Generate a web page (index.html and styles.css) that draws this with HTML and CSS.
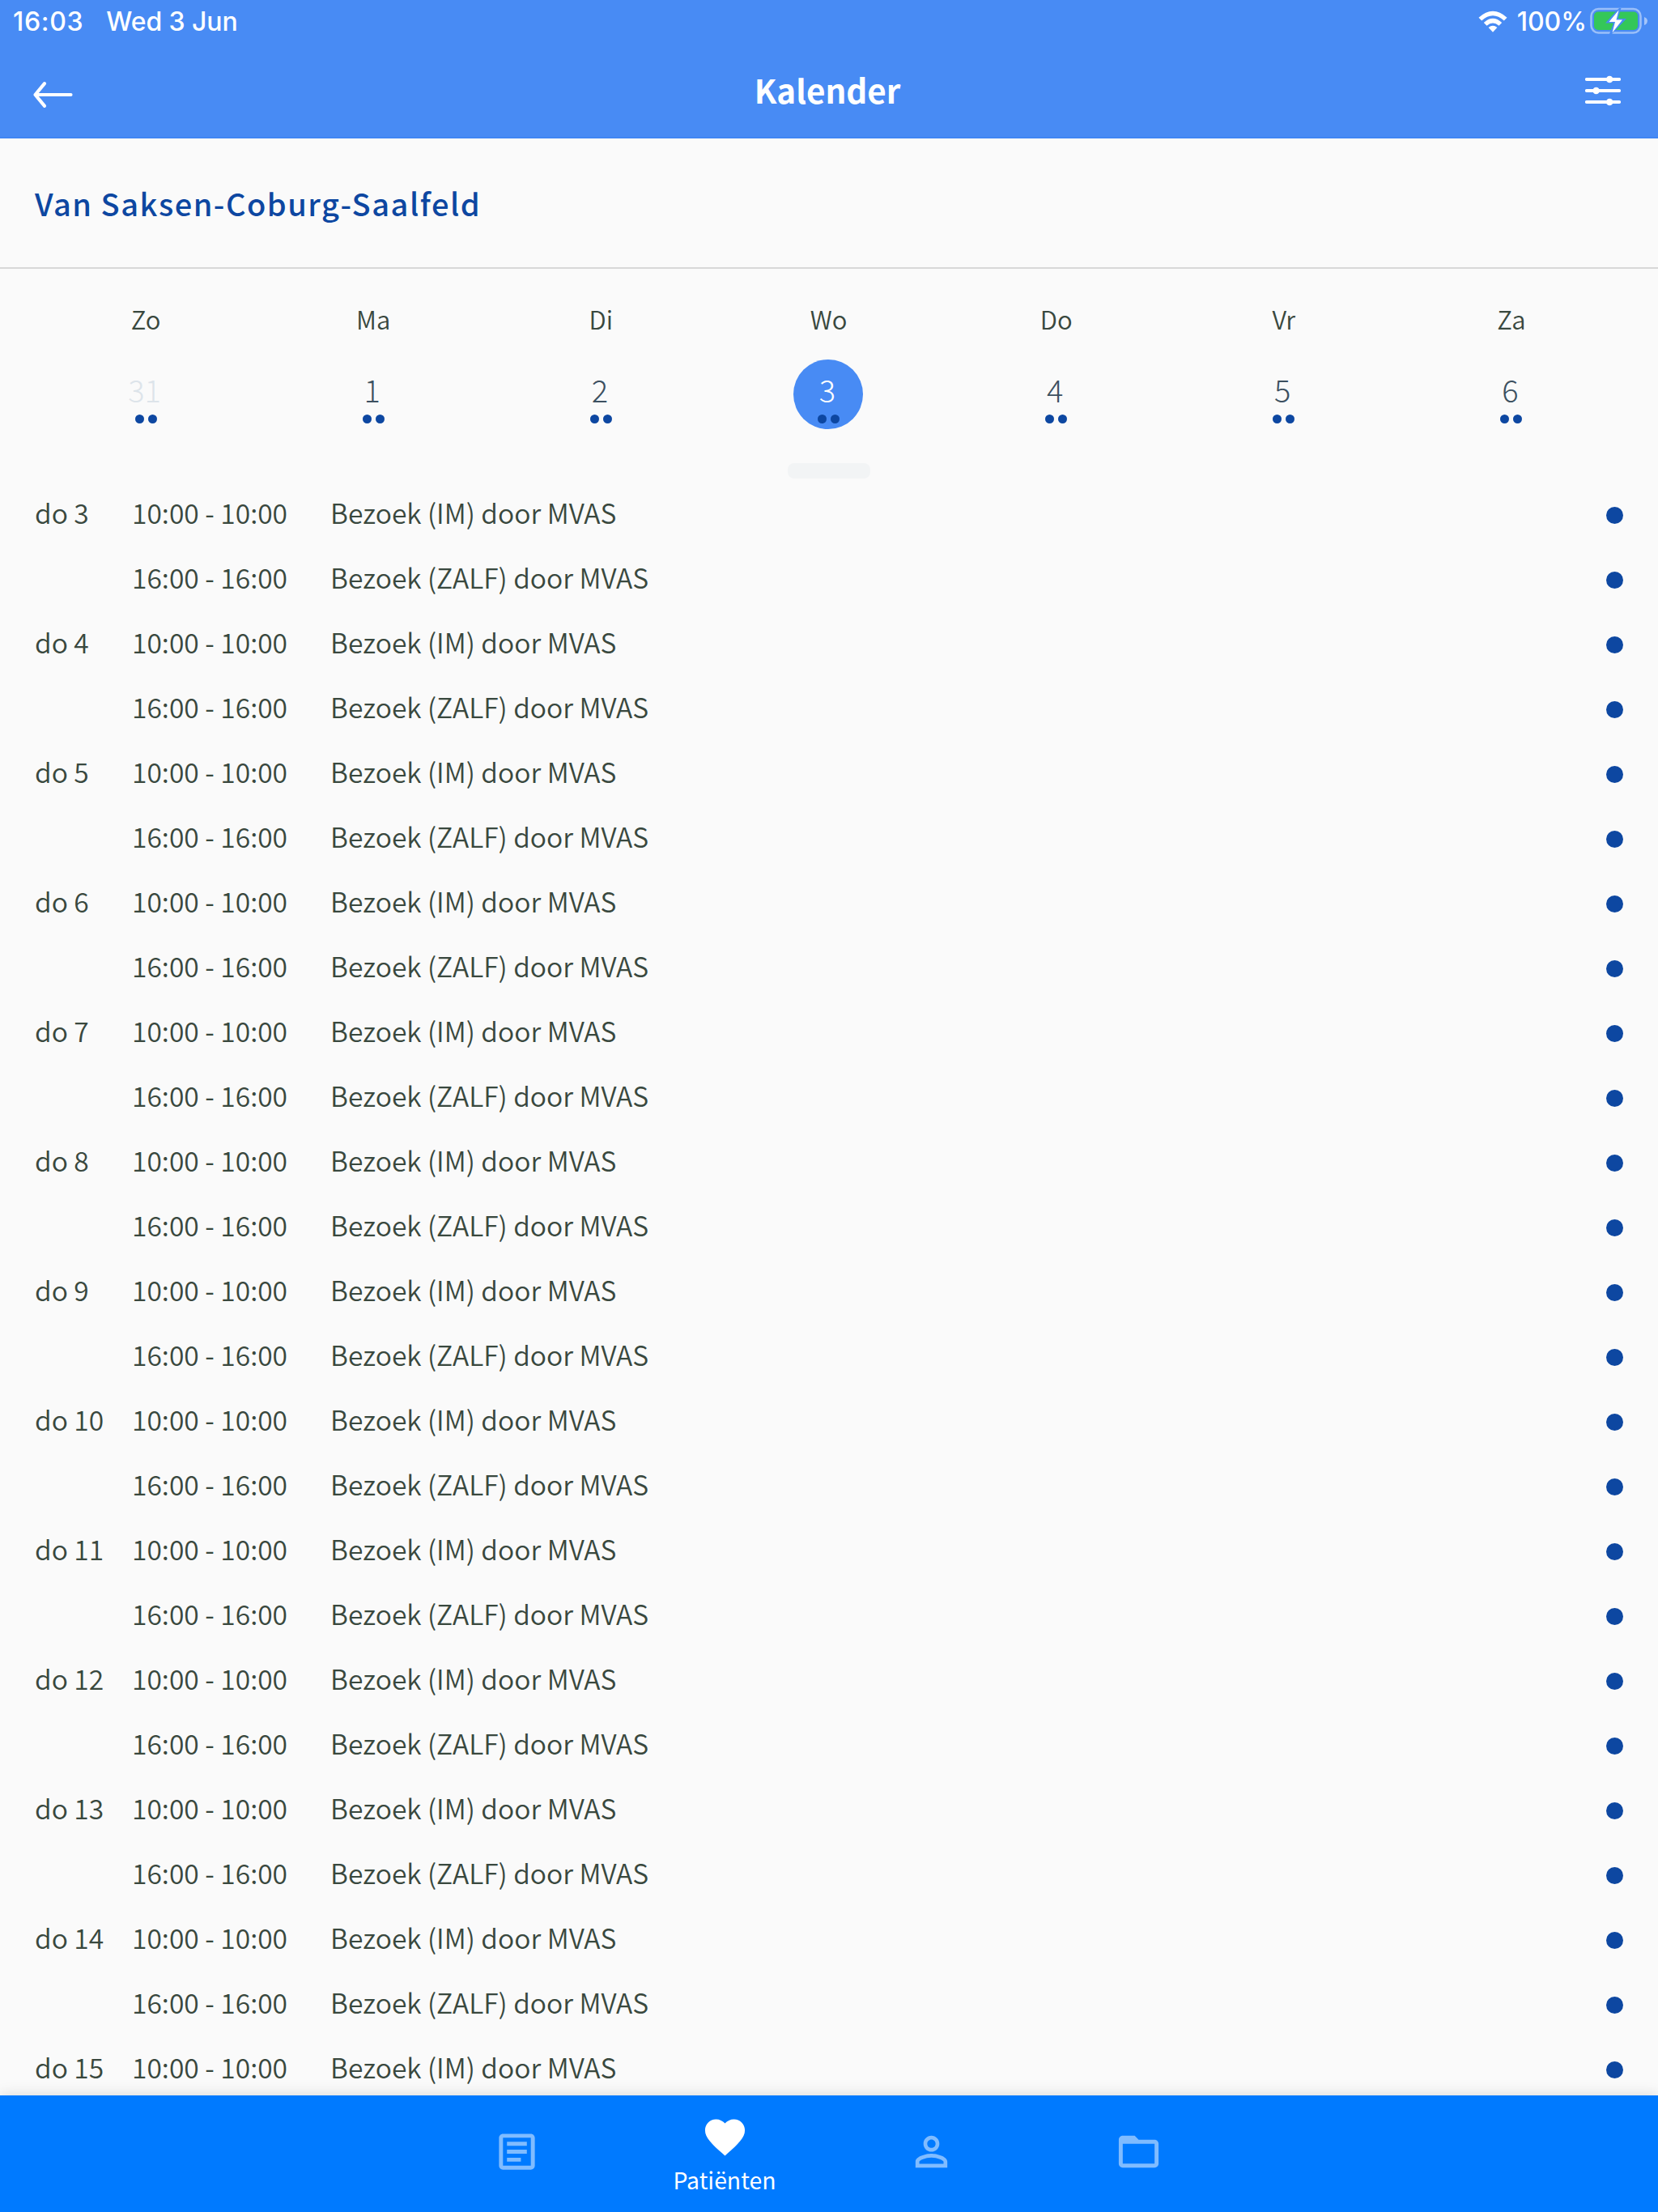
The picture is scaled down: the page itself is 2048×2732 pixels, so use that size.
FILE: index.html
```html
<!DOCTYPE html>
<html lang="nl">
<head>
  <meta charset="UTF-8">
  <title>Kalender</title>
  <link rel="stylesheet" href="styles.css">
</head>
<body>

  <header class="header">
    <div class="status">
      <span class="clock">16:03</span>
      <span class="date">Wed 3 Jun</span>
      <svg class="wifi" viewBox="0 0 36 27">
        <path d="M0.5 8.8 Q18 -7.2 35.5 8.8 L31.8 12.6 Q18 -0.2 4.2 12.6Z"/>
        <path d="M6.8 15 Q18 4.6 29.2 15 L25.5 18.8 Q18 12 10.5 18.8Z"/>
        <path d="M12.6 21 Q18 16.6 23.4 21 L18 26.8Z"/>
      </svg>
      <span class="percent">100%</span>
      <svg class="battery" viewBox="0 0 72 34">
        <rect x="1.5" y="2" width="61" height="29.5" rx="9" fill="none" stroke="#fff" stroke-opacity="0.45" stroke-width="2.6"/>
        <rect x="5" y="5.6" width="54" height="22.3" rx="5" fill="#34c759"/>
        <path d="M67 12 Q71 13.5 71 17 Q71 20.5 67 22Z" fill="#fff" fill-opacity="0.5"/>
        <path d="M36 1 L19 19.5 H29 L24 33 H27 L45 14 H34.5 L38.5 1Z" fill="#488bf4"/>
        <path d="M35.5 3.5 L23.5 18 H31 L27.5 31.5 L40 15.5 H32.5Z" fill="#fff"/>
      </svg>
    </div>
    <div class="navbar">
      <svg class="back" viewBox="0 0 50 34">
        <path d="M47.5 17 H3.5 M15 3.2 L3.5 17 L15 30.8"/>
      </svg>
      <h1 class="title">Kalender</h1>
      <svg class="filter" viewBox="0 0 44 38">
        <path d="M2 5 H42 M2 19 H42 M2 33 H42"/>
        <circle cx="30.2" cy="5" r="4.3"/>
        <circle cx="13.6" cy="19" r="4.3"/>
        <circle cx="30.2" cy="33" r="4.3"/>
      </svg>
    </div>
  </header>

  <h2 class="patient">Van Saksen-Coburg-Saalfeld</h2>

  <section class="week" id="week"></section>
  <div class="handle"></div>

  <main class="agenda" id="agenda"></main>

  <nav class="tabs">
    <a class="tab">
      <svg viewBox="0 0 24 24"><path d="M19 5v14H5V5h14m0-2H5c-1.1 0-2 .9-2 2v14c0 1.1.9 2 2 2h14c1.1 0 2-.9 2-2V5c0-1.1-.9-2-2-2zM14 17H7v-2h7v2zm3-4H7v-2h10v2zm0-4H7V7h10v2z"/></svg>
    </a>
    <a class="tab active">
      <svg viewBox="0 0 24 24"><path d="M12 21.35l-1.45-1.32C5.4 15.36 2 12.28 2 8.5 2 5.42 4.42 3 7.5 3c1.74 0 3.41.81 4.5 2.09C13.09 3.81 14.76 3 16.5 3 19.58 3 22 5.42 22 8.5c0 3.78-3.4 6.86-8.55 11.54L12 21.35z"/></svg>
      <span>Patiënten</span>
    </a>
    <a class="tab">
      <svg viewBox="0 0 24 24"><path d="M12 5.9c1.16 0 2.1.94 2.1 2.1s-.94 2.1-2.1 2.1S9.9 9.16 9.9 8s.94-2.1 2.1-2.1m0 9c2.97 0 6.1 1.46 6.1 2.1v1.1H5.9V17c0-.64 3.13-2.1 6.1-2.1M12 4C9.79 4 8 5.79 8 8s1.79 4 4 4 4-1.79 4-4-1.79-4-4-4zm0 9c-2.67 0-8 1.34-8 4v3h16v-3c0-2.66-5.33-4-8-4z"/></svg>
    </a>
    <a class="tab">
      <svg viewBox="0 0 24 24"><path d="M20 6h-8l-2-2H4c-1.1 0-1.99.9-1.99 2L2 18c0 1.1.9 2 2 2h16c1.1 0 2-.9 2-2V8c0-1.1-.9-2-2-2zm0 12H4V8h16v10z"/></svg>
    </a>
  </nav>

  <script>
    const days = [["Zo", 31], ["Ma", 1], ["Di", 2], ["Wo", 3], ["Do", 4], ["Vr", 5], ["Za", 6]];
    const visits = [["10:00 - 10:00", "IM"], ["16:00 - 16:00", "ZALF"]];

    document.getElementById("week").innerHTML = days.map(([name, nr]) => {
      const state = nr === 31 ? " outside" : nr === 3 ? " selected" : "";
      return `<div class="day${state}">
        <span class="day-name">${name}</span>
        <div class="day-number"><span>${nr}</span><div class="marks"><i></i><i></i></div></div>
      </div>`;
    }).join("");

    let rows = "";
    for (let day = 3; day <= 15; day++) {
      visits.forEach(([time, type], i) => {
        // the tab bar cuts the list off after the first visit of the 15th
        if (day === 15 && i > 0) return;
        rows += `<div class="visit">
          <span class="visit-day">${i === 0 ? "do " + day : ""}</span>
          <span class="visit-time">${time}</span>
          <span class="visit-name">Bezoek (${type}) door MVAS</span>
          <i class="visit-dot"></i>
        </div>`;
      });
    }
    document.getElementById("agenda").innerHTML = rows;
  </script>

</body>
</html>
```
FILE: styles.css
```css
* {
  box-sizing: border-box;
}

body {
  margin: 0;
  width: 2048px;
  height: 2732px;
  display: flex;
  flex-direction: column;
  overflow: hidden;
  background-color: #fafafa;
  color: #39483e;
  font-family: "Noto Sans CJK SC", "Noto Sans", sans-serif;
}

svg {
  display: block;
  flex: none;
}

.header {
  flex: none;
  height: 171px;
  background-color: #488bf4;
  border-bottom: 2px solid #3f86f3;
  color: white;
}

/* iPad status bar */
.status {
  display: flex;
  align-items: center;
  height: 52px;
  padding: 0 12px 0 16px;
  font-family: Inter, sans-serif;
  font-size: 32px;
  font-weight: 500;
}

.clock {
  letter-spacing: 0.7px;
}

.date {
  margin-left: 28px;
  letter-spacing: -0.1px;
}

.wifi {
  width: 36px;
  height: 27px;
  margin-left: auto;
  fill: white;
}

.percent {
  margin-left: 12px;
}

.battery {
  width: 72px;
  height: 34px;
  margin-left: 4px;
}

.navbar {
  display: grid;
  grid-template-columns: 1fr auto 1fr;
  align-items: center;
  height: 117px;
  padding: 0 46px 0 40px;
}

.back {
  width: 50px;
  height: 34px;
  margin-top: 13px;
}

.back path,
.filter path {
  fill: none;
  stroke: white;
  stroke-width: 4.2;
  stroke-linecap: round;
  stroke-linejoin: round;
}

.title {
  margin: 0 0 0 2px;
  font-size: 40.4px;
  font-weight: 700;
  line-height: 60px;
}

.filter {
  width: 44px;
  height: 38px;
  margin-top: 3px;
  justify-self: end;
  fill: white;
}

.patient {
  flex: none;
  height: 161px;
  margin: 0;
  padding-left: 43px;
  border-bottom: 2px solid #d8d8d8;
  color: #0d47a1;
  font-size: 38px;
  font-weight: 500;
  letter-spacing: 1.5px;
  line-height: 160px;
}

.week {
  flex: none;
  display: grid;
  grid-template-columns: repeat(7, 1fr);
  height: 240px;
  padding: 40px 40.5px 0 39.5px;
}

.day {
  display: flex;
  flex-direction: column;
  align-items: center;
}

.day-name {
  height: 72px;
  font-size: 31px;
  font-weight: 350;
  line-height: 44px;
}

.day-number {
  display: flex;
  flex-direction: column;
  align-items: center;
  width: 86px;
  height: 86px;
  padding-top: 8px;
  border-radius: 50%;
  color: #3c5060;
  font-size: 38px;
  font-weight: 300;
  line-height: 58px;
}

.day-number span {
  margin-right: 3px;
}

.outside .day-number {
  color: #dde4ea;
}

.selected .day-number {
  background-color: #488bf4;
  color: white;
}

.marks {
  display: flex;
  gap: 5px;
  margin-top: 2px;
}

.marks i {
  width: 11px;
  height: 11px;
  border-radius: 50%;
  background-color: #0d47a1;
}

.handle {
  flex: none;
  width: 102px;
  height: 19px;
  margin: 0 auto 5px;
  border-radius: 8px;
  background-color: #f2f4f5;
}

.agenda {
  flex: 1;
  min-height: 0;
  overflow: hidden;
}

.visit {
  display: flex;
  align-items: center;
  height: 80.03px;
  padding: 0 43px;
  font-size: 33.6px;
  font-weight: 350;
  line-height: 74px;
}

.visit span {
  height: 80px;
}

.visit-day {
  width: 120px;
}

.visit-time {
  width: 245px;
}

.visit-dot {
  width: 21px;
  height: 21px;
  margin-left: auto;
  border-radius: 50%;
  background-color: #0d47a1;
}

.tabs {
  position: relative;
  flex: none;
  display: flex;
  justify-content: center;
  height: 144px;
  padding-right: 3px;
  background-color: #007aff;
  box-shadow: 0 0 16px rgba(0, 0, 0, 0.15);
}

.tab {
  display: flex;
  flex-direction: column;
  align-items: center;
  justify-content: center;
  width: 256px;
  padding-bottom: 5px;
  color: white;
  font-size: 28.4px;
  line-height: 44px;
}

.tab svg {
  width: 59px;
  height: 59px;
  fill: #80bcff;
}

.tab.active {
  padding: 4px 0 0 1px;
}

.tab.active span {
  margin-top: 1px;
}

.tab.active svg {
  fill: white;
}
```
